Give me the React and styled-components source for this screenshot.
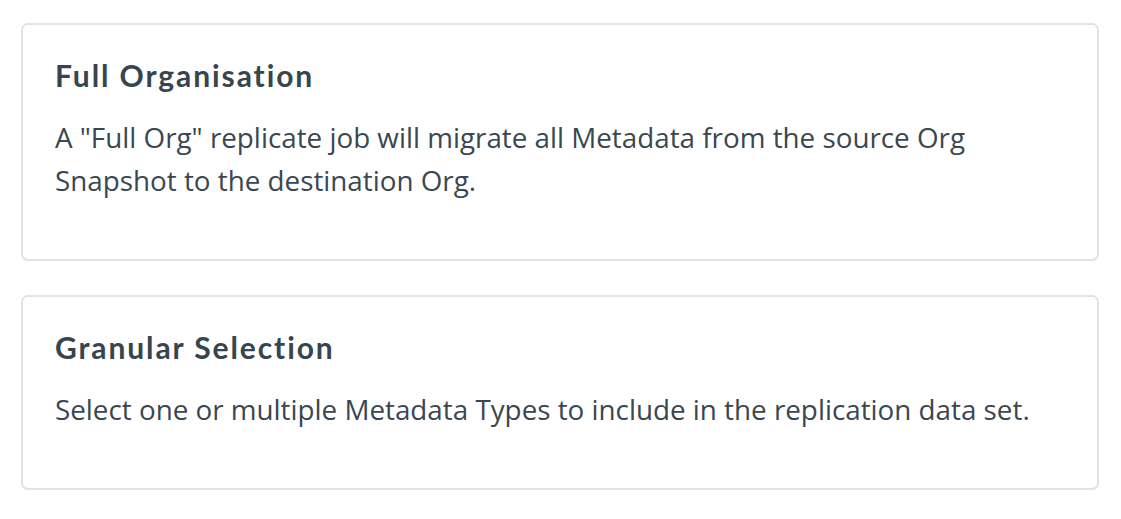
import React from "react";
import styled, { createGlobalStyle } from "styled-components";

const Global = createGlobalStyle`
  html, body { margin: 0; padding: 0; background: #ffffff; }
  body { -webkit-font-smoothing: antialiased; }
`;

const Page = styled.div`
  display: flex;
  flex-direction: column;
  gap: 34px;
  padding: 23px 22px 23px 21px;
`;

const Card = styled.section`
  border: 2px solid #dfe3e8;
  border-radius: 7px;
  padding: 32px 32px 57px 32px;
  background: #ffffff;
`;

const Title = styled.h3`
  margin: 0 0 23px 0;
  font-family: "Lato", "Noto Sans", sans-serif;
  font-weight: 700;
  font-size: 30px;
  letter-spacing: 1.9px;
  line-height: 36px;
  color: #36454e;
`;

const Text = styled.p`
  margin: 0;
  font-family: "Open Sans", "Noto Sans", sans-serif;
  font-weight: 400;
  font-size: 27.8px;
  line-height: 43px;
  color: #3a4750;
`;

const options = [
  {
    title: "Full Organisation",
    text: 'A "Full Org" replicate job will migrate all Metadata from the source Org Snapshot to the destination Org.',
  },
  {
    title: "Granular Selection",
    text: "Select one or multiple Metadata Types to include in the replication data set.",
  },
];

export default function App() {
  return (
    <>
      <Global />
      <Page>
        {options.map((o) => (
          <Card key={o.title}>
            <Title>{o.title}</Title>
            <Text>{o.text}</Text>
          </Card>
        ))}
      </Page>
    </>
  );
}
